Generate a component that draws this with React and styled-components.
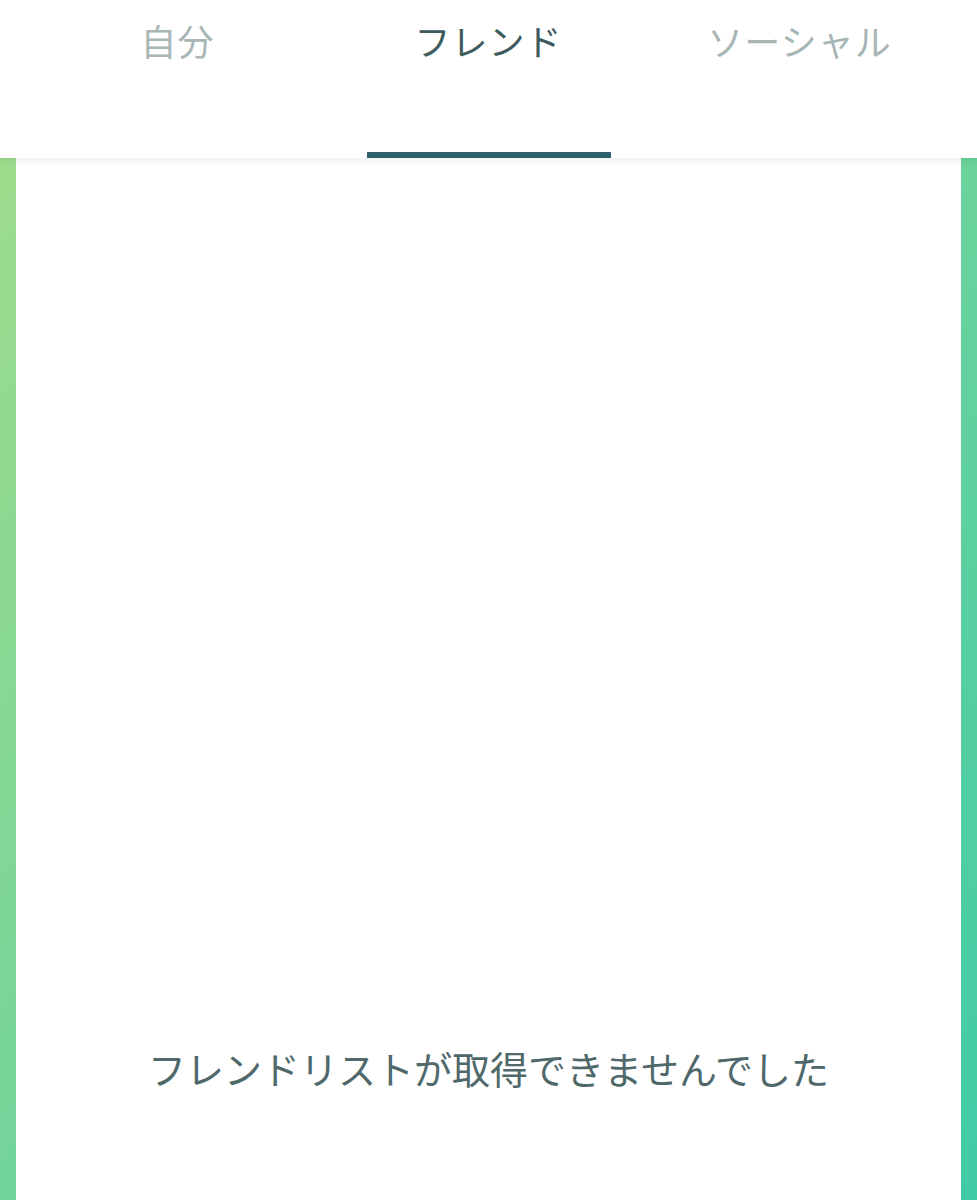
import React from "react";
import styled, { createGlobalStyle } from "styled-components";

const Global = createGlobalStyle`
  html, body { margin: 0; padding: 0; }
  body {
    width: 977px;
    height: 1200px;
    overflow: hidden;
    font-family: "Noto Sans CJK JP", "Noto Sans", sans-serif;
    background: linear-gradient(to bottom right, #a4dd8a 0%, #72d49a 50%, #3fcba6 100%);
  }
`;

const Page = styled.div`
  display: flex;
  flex-direction: column;
  height: 1200px;
`;

const Header = styled.header`
  position: relative;
  z-index: 1;
  height: 158px;
  background: #ffffff;
  box-shadow: 0 2px 8px rgba(0, 0, 0, 0.08);
  display: flex;
  padding: 0 22px;
  box-sizing: border-box;
`;

const Tab = styled.div`
  flex: 1;
  position: relative;
  display: flex;
  justify-content: center;
  padding-top: 13px;
  font-size: 36px;
  line-height: 54px;
  letter-spacing: 1px;
  color: ${(p) => (p.$active ? "#3e5c5e" : "#a9b6b6")};
`;

const Indicator = styled.span`
  position: absolute;
  bottom: 0;
  left: 50%;
  width: 244px;
  height: 6px;
  transform: translateX(-50%);
  background: #2f5f6b;
`;

const Panel = styled.main`
  flex: 1;
  margin: 0 16px;
  background: #ffffff;
  display: flex;
  flex-direction: column;
  justify-content: flex-end;
  align-items: center;
  padding-bottom: 104px;
`;

const Message = styled.p`
  margin: 0;
  font-size: 38px;
  line-height: 57px;
  color: #4f6869;
  letter-spacing: 0;
`;

export default function App() {
  const tabs = ["自分", "フレンド", "ソーシャル"];
  return (
    <>
      <Global />
      <Page>
        <Header>
          {tabs.map((t, i) => (
            <Tab key={t} $active={i === 1}>
              {t}
              {i === 1 && <Indicator />}
            </Tab>
          ))}
        </Header>
        <Panel>
          <Message>フレンドリストが取得できませんでした</Message>
        </Panel>
      </Page>
    </>
  );
}
